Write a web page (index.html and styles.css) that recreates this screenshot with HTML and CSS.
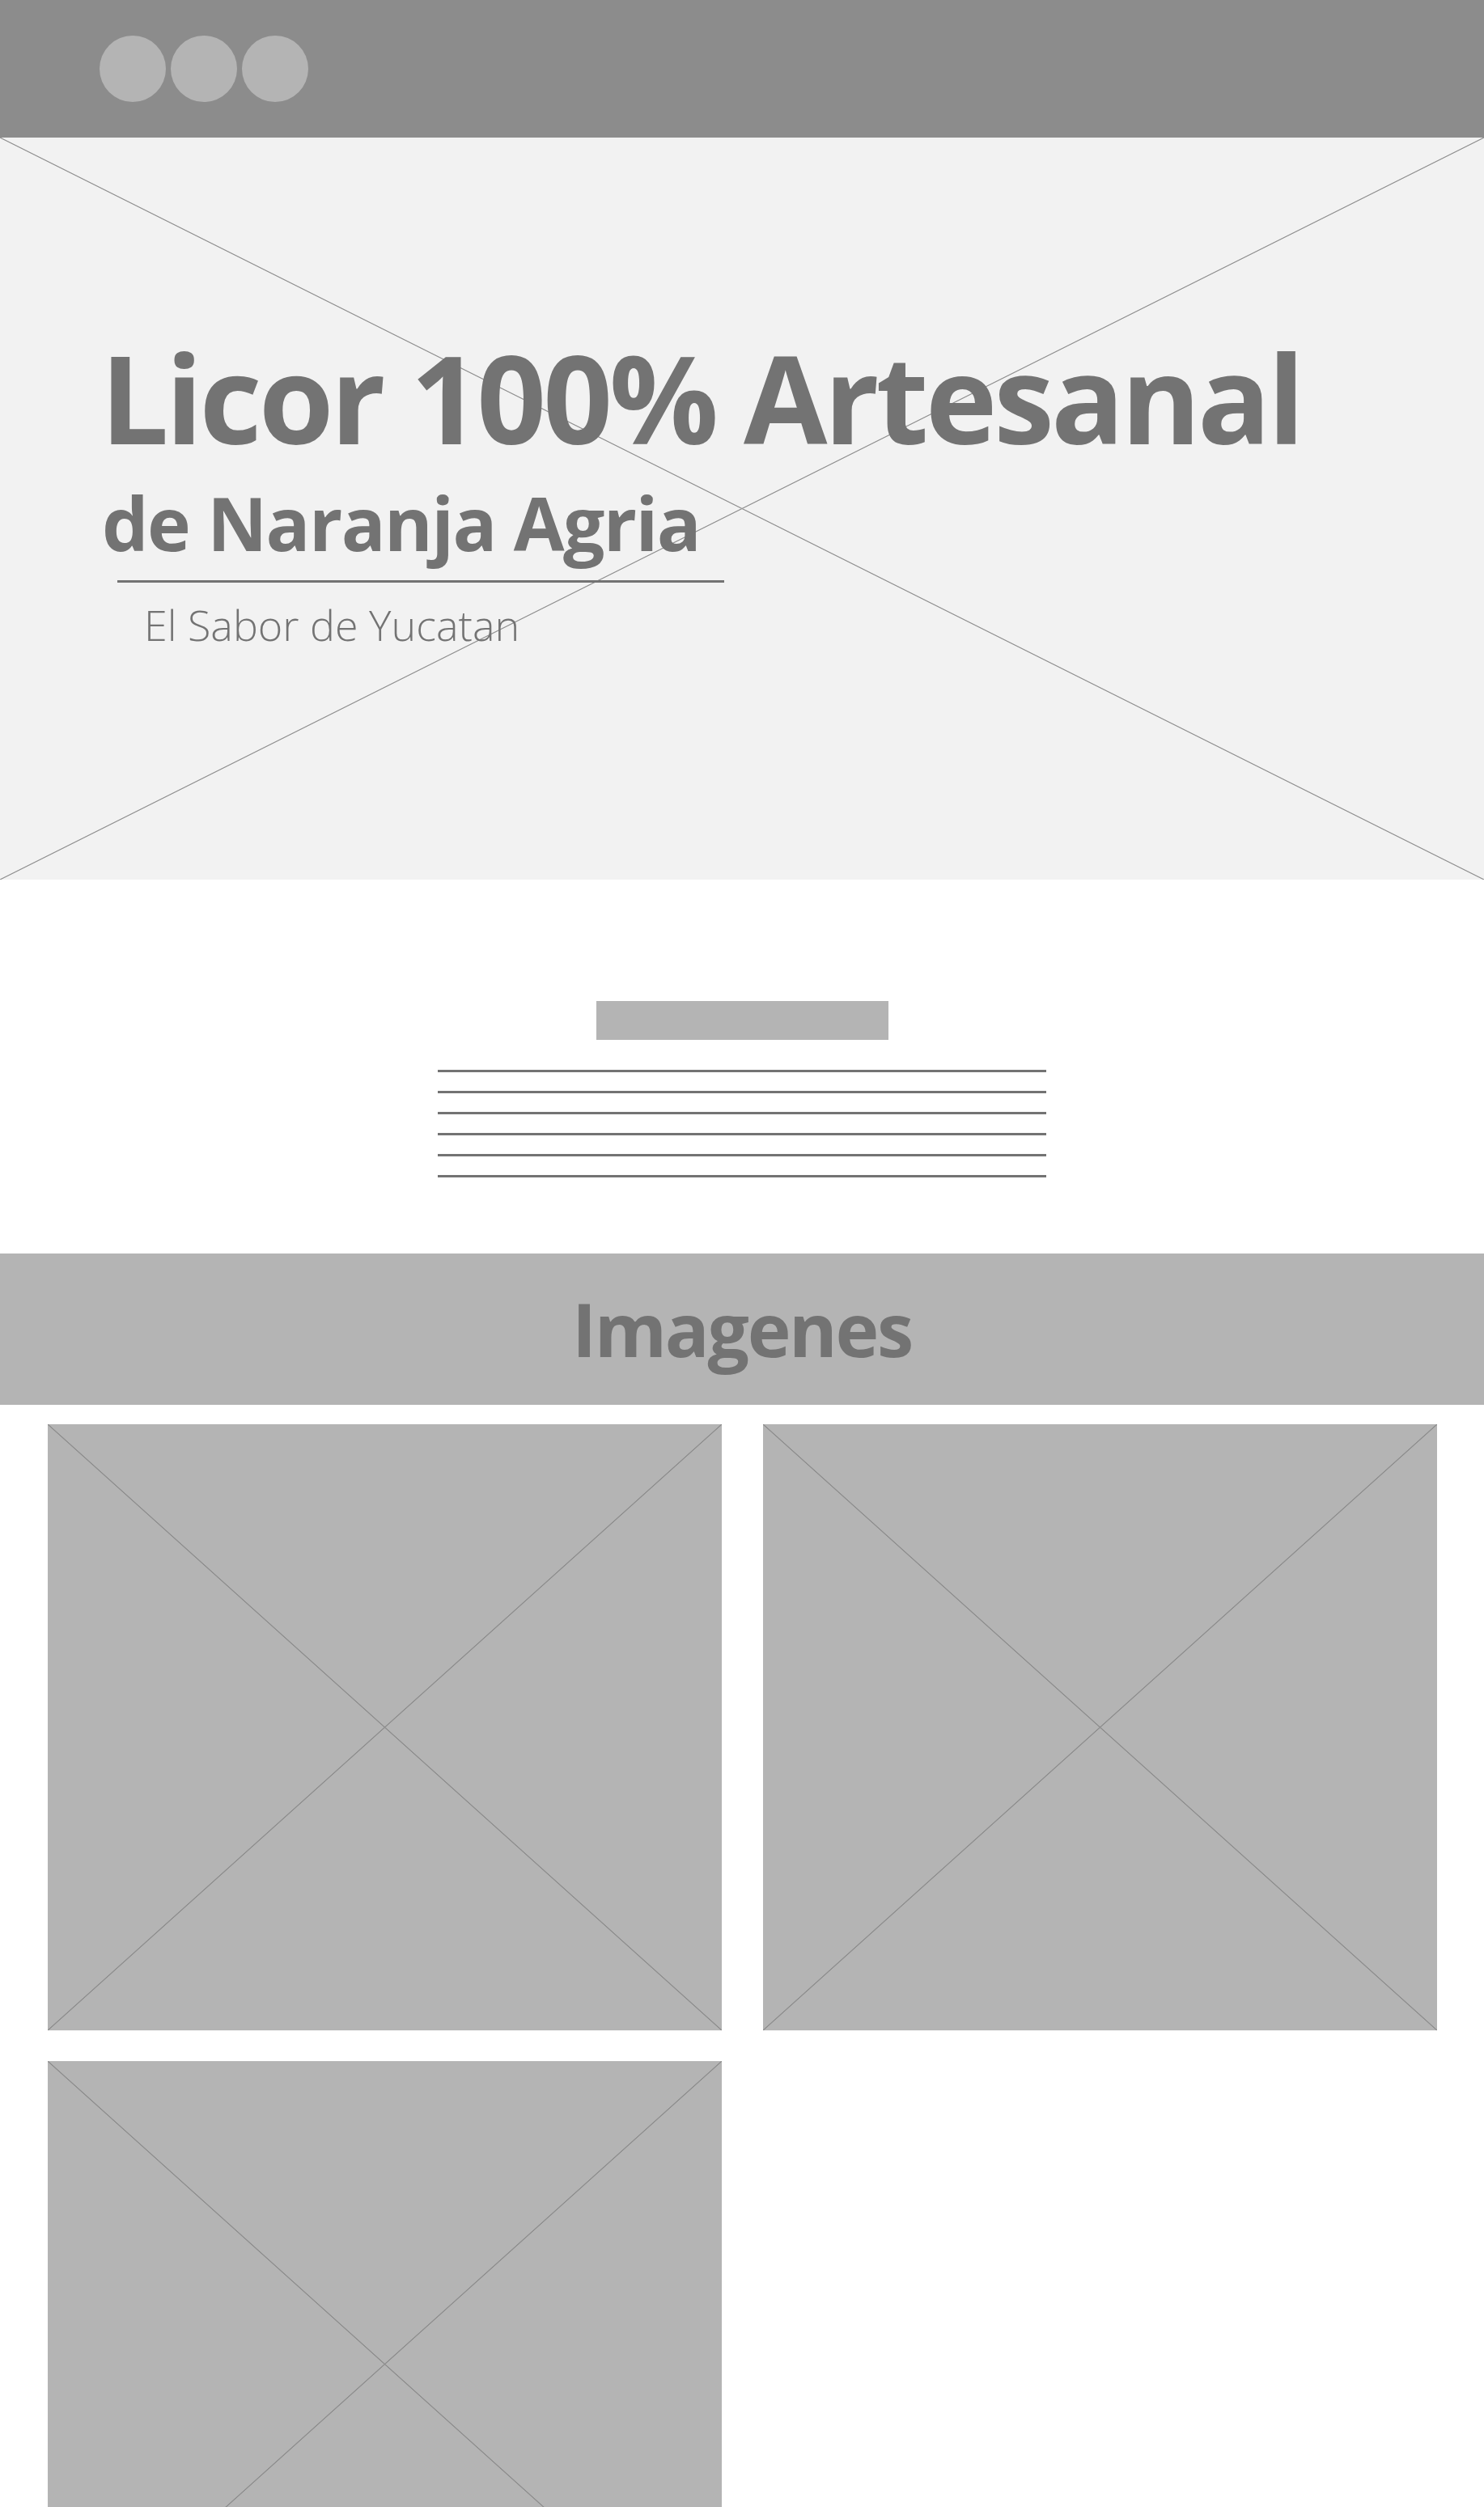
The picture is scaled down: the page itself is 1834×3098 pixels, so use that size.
FILE: index.html
```html
<!DOCTYPE html>
<html lang="es">
<head>
<meta charset="utf-8">
<title>Licor 100% Artesanal</title>
<link rel="stylesheet" href="styles.css">
</head>
<body>
<header class="topbar">
  <div class="dots">
    <span class="dot"></span>
    <span class="dot"></span>
    <span class="dot"></span>
  </div>
</header>
<section class="hero">
  <div class="hero-content">
    <h1 class="title">Licor 100% Artesanal</h1>
    <h2 class="subtitle">de Naranja Agria</h2>
    <div class="rule"></div>
    <p class="tagline">El Sabor de Yucatan</p>
  </div>
</section>
<section class="intro">
  <div class="intro-bar"></div>
  <div class="intro-lines">
    <div class="line"></div>
    <div class="line"></div>
    <div class="line"></div>
    <div class="line"></div>
    <div class="line"></div>
    <div class="line"></div>
  </div>
</section>
<section class="band">
  <h2 class="band-title">Imagenes</h2>
</section>
<section class="gallery">
  <div class="card"></div>
  <div class="card"></div>
  <div class="card"></div>
</section>
</body>
</html>
```
FILE: styles.css
```css
* { box-sizing: border-box; }
html, body { margin: 0; padding: 0; background: #ffffff; }
body { font-family: "Open Sans", "Noto Sans", sans-serif; color: #737373; }

.topbar {
  height: 170px;
  background: #8c8c8c;
  display: flex;
  align-items: center;
  padding-left: 123px;
}
.dots { display: flex; gap: 6px; }
.dot {
  width: 82px;
  height: 82px;
  border-radius: 50%;
  background: #b4b4b4;
}

.hero {
  height: 917px;
  background:
    linear-gradient(to top right, transparent calc(50% - 1px), #9a9a9a calc(50% - 0.3px), #9a9a9a calc(50% + 0.3px), transparent calc(50% + 1px)),
    linear-gradient(to bottom right, transparent calc(50% - 1px), #9a9a9a calc(50% - 0.3px), #9a9a9a calc(50% + 0.3px), transparent calc(50% + 1px)),
    #f2f2f2;
  padding-top: 246px;
  padding-left: 124px;
}
.hero-content { display: flex; flex-direction: column; align-items: flex-start; }
.title {
  margin: 0;
  font-size: 150px;
  line-height: 1;
  font-weight: 700;
  letter-spacing: -4px;
  color: #737373;
}
.subtitle {
  margin: 35px 0 0 2px;
  font-size: 91px;
  line-height: 1;
  font-weight: 700;
  letter-spacing: -1.6px;
  color: #737373;
}
.rule {
  margin: 25px 0 0 21px;
  width: 750px;
  height: 3px;
  background: #737373;
}
.tagline {
  margin: 26px 0 0 54px;
  font-size: 52px;
  line-height: 1;
  font-weight: 300;
  color: #737373;
}

.intro {
  height: 462px;
  display: flex;
  flex-direction: column;
  align-items: center;
  padding-top: 150px;
}
.intro-bar {
  width: 361px;
  height: 48px;
  background: #b4b4b4;
}
.intro-lines {
  margin-top: 37px;
  width: 752px;
  display: flex;
  flex-direction: column;
  gap: 23px;
}
.line { height: 3px; background: #737373; }

.band {
  height: 187px;
  background: #b4b4b4;
  display: flex;
  justify-content: center;
  padding-top: 48px;
}
.band-title {
  margin: 0;
  font-size: 91px;
  line-height: 1;
  font-weight: 700;
  letter-spacing: -2.3px;
  color: #737373;
}

.gallery {
  display: grid;
  grid-template-columns: 833px 833px;
  column-gap: 51px;
  row-gap: 38px;
  padding: 24px 0 60px 59px;
}
.card {
  height: 749px;
  background:
    linear-gradient(to top right, transparent calc(50% - 1px), #8e8e8e calc(50% - 0.3px), #8e8e8e calc(50% + 0.3px), transparent calc(50% + 1px)),
    linear-gradient(to bottom right, transparent calc(50% - 1px), #8e8e8e calc(50% - 0.3px), #8e8e8e calc(50% + 0.3px), transparent calc(50% + 1px)),
    #b4b4b4;
}
```
